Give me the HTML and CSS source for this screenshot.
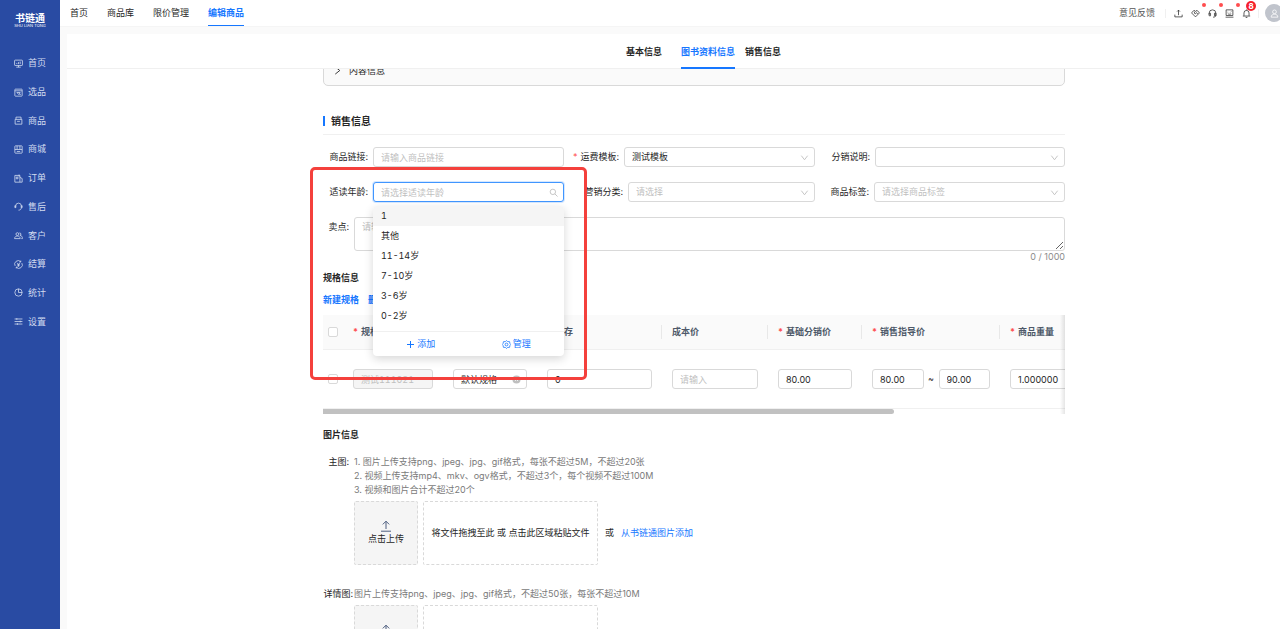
FILE: index.html
```html
<!DOCTYPE html>
<html lang="zh-CN">
<head>
<meta charset="utf-8">
<meta name="viewport" content="width=device-width, initial-scale=1">
<title>编辑商品</title>
<link rel="stylesheet" href="styles.css">
</head>
<body>
<svg class="sprite" aria-hidden="true">
  <symbol id="i-down" viewBox="0 0 10 10"><path d="M1.5 3 5 7.5 8.5 3"/></symbol>
  <symbol id="i-upload" viewBox="0 0 12 12"><path d="M6 9V1.2M2.8 4.4 6 1.2l3.2 3.2M1 11.2h10"/></symbol>
</svg>
<div class="app">
  <aside class="sidebar">
    <div class="logo"><span class="logo-name">书链通</span><span class="logo-sub">SHU LIAN TONG</span></div>
    <nav>
      <ul class="menu">
        <li><a href="#"><svg class="icon" viewBox="0 0 16 16"><rect x="1" y="2" width="14" height="9.5" rx="1"/><path d="M4 14.5h8M8 11.5v3M5 9V7M8 9V5.500M11 9V4.500"/></svg>首页</a></li>
        <li><a href="#"><svg class="icon" viewBox="0 0 16 16"><rect x="1.500" y="2" width="13" height="12.500" rx="1"/><path d="M1.500 5h13M5 8h6l-2 4-4-4M10 10l2 2"/></svg>选品</a></li>
        <li><a href="#"><svg class="icon" viewBox="0 0 16 16"><path d="M2 6h12v8.500H2zM3.500 6V2h9v4M5.500 9.500h5"/></svg>商品</a></li>
        <li><a href="#"><svg class="icon" viewBox="0 0 16 16"><rect x="1.500" y="1.500" width="13" height="13" rx="1"/><path d="M1.500 8h13M5.500 1.500V8M10.500 1.500V8M5 11.500h6"/></svg>商城</a></li>
        <li><a href="#"><svg class="icon" viewBox="0 0 16 16"><path d="M10.500 14.500h-9v-12h9zM10.500 6l4 2v6.500h-4M4 5.500h3v3H4zM9 1v4"/></svg>订单</a></li>
        <li><a href="#"><svg class="icon" viewBox="0 0 16 16"><path d="M3 10V7a5 5 0 0 1 10 0v3c0 3-2 4.500-5 4.500M3 6.500H1.500V10H3zM13 6.500h1.500V10H13z"/></svg>售后</a></li>
        <li><a href="#"><svg class="icon" viewBox="0 0 16 16"><circle cx="6" cy="5.500" r="2.500"/><path d="M1 13.500c0-6 10-6 10 0zM9.500 3.500a2.300 2.300 0 1 1 1 4.500c3 0 4.500 2 4.500 5.500h-2"/></svg>客户</a></li>
        <li><a href="#"><svg class="icon" viewBox="0 0 16 16"><path d="M2 10.500A6.300 6.300 0 0 1 12 3M14 5.500A6.300 6.300 0 0 1 4 13M12 1v2.500H9.500M4 15v-2.500h2.500M5.500 5 8 8l2.500-3M8 8v4M6 8h4M6 10h4"/></svg>结算</a></li>
        <li><a href="#"><svg class="icon" viewBox="0 0 16 16"><circle cx="8" cy="8" r="6.500"/><path d="M8 1.500V8h6.500"/></svg>统计</a></li>
        <li><a href="#"><svg class="icon" viewBox="0 0 16 16"><path d="M1 3.500h14M1 8h14M1 12.500h14M5 2v3M11 6.500v3M6 11v3"/></svg>设置</a></li>
      </ul>
    </nav>
  </aside>

  <div class="main">
    <header class="topbar">
      <nav class="topnav">
        <a href="#">首页</a>
        <a href="#">商品库</a>
        <a href="#">限价管理</a>
        <a href="#" class="active" aria-current="page">编辑商品</a>
      </nav>
      <div class="tools">
        <a href="#" class="feedback">意见反馈</a>
        <div class="tool-icons">
          <button type="button" aria-label="上传"><svg class="icon" viewBox="0 0 16 16"><path d="M8 11V2M5.500 4.500 8 2l2.500 2.500M1.500 10v4h13v-4"/></svg></button>
          <button type="button" aria-label="合作"><svg class="icon" viewBox="0 0 16 16"><path d="M8 14 1 7l3.500-4H7l1 1 1-1h2.500L15 7zM8 4 5.500 7l2 1.500L10 6.500l2 2.500"/></svg><i class="dot"></i></button>
          <button type="button" aria-label="客服"><svg class="icon" viewBox="0 0 16 16"><path d="M2 10V7.500a6 6 0 0 1 12 0V11c0 2.500-2 3.500-5 3.500M2 7.500h2.500V12H2zM14 7.500h-2.500V12H14z"/></svg><i class="dot"></i></button>
          <button type="button" aria-label="工单"><svg class="icon" viewBox="0 0 16 16"><path d="M2 1.500h12v10H2zM1 14.500h14M5 5v1M11 4.500 9.500 6M5 8.500c2 1 4 1 6 0"/></svg><i class="dot"></i></button>
          <button type="button" aria-label="通知"><svg class="icon" viewBox="0 0 16 16"><path d="M3.500 12V7a4.500 4.500 0 0 1 9 0v5M1.500 12.500h13M6.500 15h3M8 1v1.500"/></svg><span class="badge">8</span></button>
        </div>
        <button type="button" class="avatar" aria-label="账户"><svg class="icon" viewBox="0 0 16 16"><circle cx="8" cy="5" r="3.300"/><path d="M2 14.500c0-7 12-7 12 0z"/></svg></button>
      </div>
    </header>

    <main class="panel">
      <nav class="tabs">
        <a href="#">基本信息</a>
        <a href="#" class="active">图书资料信息</a>
        <a href="#">销售信息</a>
      </nav>
      <div class="scroller">
        <button type="button" class="collapse"><svg class="icon" viewBox="0 0 10 10"><path d="M2.500 1 7.500 5l-5 4"/></svg>内容信息</button>

        <h2 class="section-title">销售信息</h2>
        <form class="form">
          <div class="fields">
            <div class="field"><label for="link">商品链接:</label><div class="control"><input id="link" type="text" placeholder="请输入商品链接"></div></div>
            <div class="field l60"><label for="freight" class="required">运费模板:</label><div class="control"><select id="freight"><option>测试模板</option></select><svg class="icon arrow"><use href="#i-down"/></svg></div></div>
            <div class="field l60"><label for="dist">分销说明:</label><div class="control"><select id="dist"><option></option></select><svg class="icon arrow"><use href="#i-down"/></svg></div></div>

            <div class="field">
              <label for="age">适读年龄:</label>
              <div class="control">
                <input id="age" class="focused" type="text" role="combobox" aria-expanded="true" aria-controls="age-list" placeholder="请选择适读年龄">
                <svg class="icon arrow" viewBox="0 0 10 10"><circle cx="4.300" cy="4.300" r="3"/><path d="m6.500 6.500 3 3"/></svg>
                <div class="dropdown">
                  <ul id="age-list" role="listbox">
                    <li role="option" aria-selected="false" class="hover">1</li>
                    <li role="option" aria-selected="false">其他</li>
                    <li role="option" aria-selected="false">11-14岁</li>
                    <li role="option" aria-selected="false">7-10岁</li>
                    <li role="option" aria-selected="false">3-6岁</li>
                    <li role="option" aria-selected="false">0-2岁</li>
                  </ul>
                  <div class="dropdown-foot">
                    <button type="button"><svg class="icon thin" viewBox="0 0 9 9"><path d="M4.500 1v7M1 4.500h7"/></svg>添加</button>
                    <button type="button"><svg class="icon" viewBox="0 0 16 16"><path d="m8 1 2 1.800 3.500.2.500 3L15.500 8 14 10l-.5 3-3.500.2L8 15l-2-1.800L2.500 13 2 10 .5 8 2 6l.5-3L6 2.800z"/><circle cx="8" cy="8" r="2.500"/></svg>管理</button>
                  </div>
                </div>
              </div>
            </div>
            <div class="field l64"><label for="cat">营销分类:</label><div class="control"><select id="cat" class="empty"><option>请选择</option></select><svg class="icon arrow"><use href="#i-down"/></svg></div></div>
            <div class="field l59"><label for="tag">商品标签:</label><div class="control"><select id="tag" class="empty"><option>请选择商品标签</option></select><svg class="icon arrow"><use href="#i-down"/></svg></div></div>
          </div>

          <div class="field l31 top">
            <label for="point">卖点:</label>
            <div class="control"><textarea id="point" placeholder="请输入卖点"></textarea><div class="count">0 / 1000</div></div>
          </div>

          <h3 class="sub-title">规格信息</h3>
          <div class="links"><a href="#">新建规格</a><a href="#">删除规格</a></div>

          <div class="table-wrap">
            <table class="specs">
              <colgroup><col class="c20"><col class="c100"><col class="c94"><col class="c125"><col class="c106"><col class="c94"><col class="c138"><col class="c130"><col class="c157"></colgroup>
              <thead><tr>
                <th class="check"><input type="checkbox" aria-label="全选"></th>
                <th><span class="required">规格编码</span></th>
                <th><span class="required">规格值</span></th>
                <th class="split"><span class="required">库存</span></th>
                <th class="split">成本价</th>
                <th class="split"><span class="required">基础分销价</span></th>
                <th class="split"><span class="required">销售指导价</span></th>
                <th><span class="required">商品重量</span></th>
                <th></th>
              </tr></thead>
              <tbody><tr>
                <td class="check"><input type="checkbox" aria-label="选择此规格"></td>
                <td><input type="text" class="tabular" disabled value="测试111021" aria-label="规格编码"></td>
                <td><div class="control"><input type="text" value="默认规格" aria-label="规格值"><svg class="icon arrow clear" viewBox="0 0 10 10"><circle cx="5" cy="5" r="4.500"/><path d="m3.500 3.500 3 3m0-3-3 3"/></svg></div></td>
                <td><input type="text" value="0" aria-label="库存"></td>
                <td><input type="text" placeholder="请输入" aria-label="成本价"></td>
                <td><input type="text" value="80.00" aria-label="基础分销价"></td>
                <td><div class="range"><input type="text" value="80.00" aria-label="最低指导价"><span>~</span><input type="text" value="90.00" aria-label="最高指导价"></div></td>
                <td><input type="text" value="1.000000" aria-label="商品重量"></td>
                <td></td>
              </tr></tbody>
            </table>
            <div class="track"><div class="thumb"></div></div>
          </div>

          <h3 class="sub-title pictures">图片信息</h3>
          <div class="field l31 top media">
            <span class="label">主图:</span>
            <div class="media-body">
              <ol class="hints">
                <li>1. 图片上传支持png、jpeg、jpg、gif格式，每张不超过5M，不超过20张</li>
                <li>2. 视频上传支持mp4、mkv、ogv格式，不超过3个，每个视频不超过100M</li>
                <li>3. 视频和图片合计不超过20个</li>
              </ol>
              <div class="uploads">
                <button type="button" class="upload"><svg class="icon"><use href="#i-upload"/></svg>点击上传</button>
                <div class="drop">将文件拖拽至此 或 点击此区域粘贴文件</div>
                <span>或</span><a href="#">从书链通图片添加</a>
              </div>
            </div>
          </div>
          <div class="field l31 top media details">
            <span class="label">详情图:</span>
            <div class="media-body">
              <p class="hints">图片上传支持png、jpeg、jpg、gif格式，不超过50张，每张不超过10M</p>
              <div class="uploads">
                <button type="button" class="upload"><svg class="icon"><use href="#i-upload"/></svg>点击上传</button>
                <div class="drop">将文件拖拽至此 或 点击此区域粘贴文件</div>
                <span>或</span><a href="#">从书链通图片添加</a>
              </div>
            </div>
          </div>
          <div class="callout" aria-hidden="true"></div>
        </form>
      </div>
    </main>
  </div>
</div>
</body>
</html>
```
FILE: styles.css
```css
:root {
  --blue: #1677ff;
  --line: #d9d9d9;
  --soft: #f0f0f0;
  --text: #262626;
  --muted: #bfbfbf;
}

* { box-sizing: border-box; }

body {
  margin: 0;
  font: 9px/14px Inter, "Noto Sans CJK SC", sans-serif;
  color: var(--text);
  background: #fafafa;
}

button, input, select, textarea {
  font: inherit;
  color: inherit;
}

button {
  border: 0;
  padding: 0;
  background: none;
}

a { color: var(--blue); text-decoration: none; }
ul, ol { list-style: none; margin: 0; padding: 0; }
h2, h3, p { margin: 0; }

.sprite { position: absolute; width: 0; height: 0; }

.icon {
  flex: none;
  width: 9px;
  height: 9px;
  fill: none;
  stroke: currentColor;
  stroke-width: 1.4;
}

.thin { stroke-width: 1; }

.app { display: flex; height: 100vh; overflow: hidden; }

/* sidebar */
.sidebar {
  flex: none;
  width: 60px;
  background: #294ba3;
}

.logo {
  display: flex;
  flex-direction: column;
  align-items: center;
  height: 49px;
  padding-top: 13px;
  color: #fff;
}

.logo-name { font-size: 10px; font-weight: 700; line-height: 11px; }
.logo-sub { font-size: 4px; line-height: 4px; white-space: nowrap; }

.menu { display: grid; grid-auto-rows: 1fr; height: 287px; }

.menu a {
  display: flex;
  align-items: center;
  gap: 5px;
  height: 100%;
  padding-left: 14px;
  color: #d3dcf0;
}

/* top bar */
.main { flex: 1; min-width: 0; display: flex; flex-direction: column; }

.topbar {
  display: flex;
  flex: none;
  justify-content: space-between;
  height: 27px;
  padding-left: 10px;
  background: #fff;
  border-bottom: 1px solid #f5f5f5;
  overflow: hidden;
}

.topnav { display: flex; gap: 19px; }

.topnav a {
  height: 27px;
  line-height: 26px;
  color: var(--text);
}

.topnav .active {
  color: var(--blue);
  font-weight: 700;
  border-bottom: 2px solid var(--blue);
}

.tools { display: flex; align-items: center; margin-right: -3px; }
.feedback { color: #555; padding-right: 10px; }

.tool-icons {
  display: flex;
  gap: 8px;
  padding: 0 7px 0 8px;
  border: solid var(--soft);
  border-width: 0 1px;
}

.tool-icons button { position: relative; display: flex; color: #333; }

.dot {
  position: absolute;
  top: -6px;
  right: -6px;
  width: 4px;
  height: 4px;
  border-radius: 50%;
  background: #ff4d4f;
}

.badge {
  position: absolute;
  top: -9px;
  left: 4px;
  width: 9px;
  height: 9px;
  border-radius: 50%;
  background: #f5222d;
  color: #fff;
  font-size: 8px;
  font-weight: 700;
  line-height: 9px;
  text-align: center;
}

.tool-icons .badge { top: -8px; left: 4px; width: 10px; line-height: 10px; height: 10px; }

.avatar {
  display: grid;
  place-items: center;
  width: 18px;
  height: 18px;
  margin-left: 6px;
  border-radius: 50%;
  background: #c0c4cc;
  color: #fff;
}

/* page */
.panel {
  display: flex;
  flex: 1;
  flex-direction: column;
  min-height: 0;
  margin: 7px 0 0 7px;
  background: #fff;
}

.tabs {
  display: flex;
  flex: none;
  justify-content: center;
  gap: 10px;
  height: 35px;
  padding-left: 60px;
  border-bottom: 1px solid var(--soft);
  font-weight: 700;
  line-height: 36px;
}

.tabs a { height: 35px; color: var(--text); }
.tabs a:first-child { padding-right: 9px; }
.tabs .active { color: var(--blue); border-bottom: 2px solid var(--blue); }

.scroller {
  flex: 1;
  min-height: 0;
  padding: 0 215px 0 256px;
  overflow-x: hidden;
  overflow-y: auto;
  scrollbar-width: none;
}

.collapse {
  display: flex;
  align-items: center;
  gap: 7px;
  width: 100%;
  height: 31px;
  margin-top: -14px;
  padding-left: 9px;
  border: 1px solid var(--line);
  border-radius: 5px;
  background: #fafafa;
}

.collapse .icon { stroke-width: 1; }

.section-title {
  display: flex;
  align-items: center;
  gap: 6px;
  height: 27px;
  margin-top: 22px;
  border-bottom: 1px solid var(--soft);
  font-size: 10px;
}

.section-title::before {
  content: "";
  width: 2px;
  height: 10px;
  background: var(--blue);
}

.form { position: relative; padding-top: 12px; }

.fields {
  display: grid;
  grid-template-columns: 241fr 251fr 250fr;
  gap: 15px 0;
  margin-bottom: 15px;
}

.field {
  --label: 50px;
  display: grid;
  grid-template-columns: var(--label) minmax(0, 1fr);
  align-items: center;
}

.l31 { --label: 31px; }
.l59 { --label: 59px; }
.l60 { --label: 60px; }
.l64 { --label: 64px; }
.top { align-items: start; }

.field label, .label {
  padding-right: 5px;
  text-align: right;
  white-space: nowrap;
}

.top label { line-height: 20px; }

.required::before {
  content: "*";
  margin-right: 3px;
  color: #ff4d4f;
}

.control { position: relative; }

input[type="text"], select, textarea {
  display: block;
  width: 100%;
  height: 20px;
  padding: 0 7px;
  border: 1px solid var(--line);
  border-radius: 3px;
  background: #fff;
  appearance: none;
  outline: 0;
}

::placeholder, select.empty { color: var(--muted); opacity: 1; }

input.focused {
  border-color: #4096ff;
  box-shadow: 0 0 0 1px #d6e8ff;
}

input[type="text"]:disabled { background: #f5f5f5; color: var(--muted); }

.tabular { font-variant-numeric: tabular-nums; }

textarea { height: 34px; padding: 2px 7px; resize: vertical; }

.arrow {
  position: absolute;
  top: 6px;
  right: 6px;
  color: var(--muted);
  stroke-width: 1;
  pointer-events: none;
}

.clear circle { fill: var(--muted); stroke: none; }
.clear path { stroke: #fff; }

.count { color: #8c8c8c; line-height: 12px; text-align: right; }

.dropdown {
  position: absolute;
  z-index: 2;
  top: 24px;
  left: 0;
  width: 100%;
  border-radius: 4px;
  background: #fff;
  box-shadow: 0 3px 10px rgba(0, 0, 0, .16);
  font-variant-numeric: tabular-nums;
  overflow: hidden;
}

.dropdown ul { padding-bottom: 5px; }
.dropdown li { padding: 0 8px; line-height: 20px; }
.dropdown .hover { background: #f5f5f5; }

.dropdown-foot {
  display: grid;
  grid-template-columns: 1fr 1fr;
  height: 25px;
  border-top: 1px solid var(--soft);
}

.dropdown-foot button {
  display: flex;
  align-items: center;
  justify-content: center;
  gap: 2px;
  color: var(--blue);
}

.sub-title { margin-top: 8px; font-size: 9px; }
.pictures { margin-top: 14px; }
.links { display: flex; gap: 9px; margin: 8px 0; font-weight: 700; }

/* spec table */
.table-wrap { position: relative; overflow: hidden; }

.table-wrap::after {
  content: "";
  position: absolute;
  inset: 0 0 0 auto;
  width: 5px;
  background: linear-gradient(to right, transparent, rgba(0, 0, 0, .1));
}

.specs { width: 964px; table-layout: fixed; border-collapse: separate; border-spacing: 0; }

.c20 { width: 20px; }
.c94 { width: 94px; }
.c100 { width: 100px; }
.c106 { width: 106px; }
.c125 { width: 125px; }
.c130 { width: 130px; }
.c138 { width: 138px; }
.c157 { width: 157px; }

.specs th, .specs td {
  padding: 0 10px;
  border-bottom: 1px solid var(--soft);
  text-align: left;
}

.specs th { height: 35px; background: #fafafa; color: #4e5969; }
.specs td { height: 59px; }
.specs .check { padding: 0 5px; }

.specs .split {
  background: linear-gradient(#e8e8e8, #e8e8e8) right center / 1px 14px no-repeat #fafafa;
}

input[type="checkbox"] {
  display: block;
  width: 10px;
  height: 10px;
  margin: 0;
  border: 1px solid var(--line);
  border-radius: 2px;
  background: #fff;
  appearance: none;
}

.range {
  display: grid;
  grid-template-columns: 1fr 15px 1fr;
  align-items: center;
  text-align: center;
}

.track { height: 5px; }
.thumb { width: 77%; height: 5px; border-radius: 0 3px 3px 0; background: #c1c1c1; }

/* pictures */
.media { margin-top: 13px; }
.details { margin-top: 22px; }
.details .label { padding-right: 1px; }
.hints { color: #7a7a7a; white-space: nowrap; }

.uploads { display: flex; align-items: center; margin-top: 4px; }

.upload {
  display: flex;
  flex-direction: column;
  align-items: center;
  justify-content: center;
  width: 64px;
  height: 64px;
  margin-right: 5px;
  border: 1px dashed var(--line);
  border-radius: 2px;
  background: #f5f5f5;
}

.upload .icon { width: 12px; height: 12px; color: #4e5f80; stroke-width: 1; }

.drop {
  display: grid;
  place-items: center;
  width: 175px;
  height: 64px;
  margin-right: 7px;
  border: 1px dashed var(--line);
  border-radius: 2px;
}

.uploads a { margin-left: 7px; }

/* highlight frame around the age picker */
.callout {
  position: absolute;
  z-index: 3;
  top: 32px;
  left: -13px;
  width: 277px;
  height: 213px;
  border: 3px solid #f4403c;
  border-radius: 5px;
  pointer-events: none;
}
```
